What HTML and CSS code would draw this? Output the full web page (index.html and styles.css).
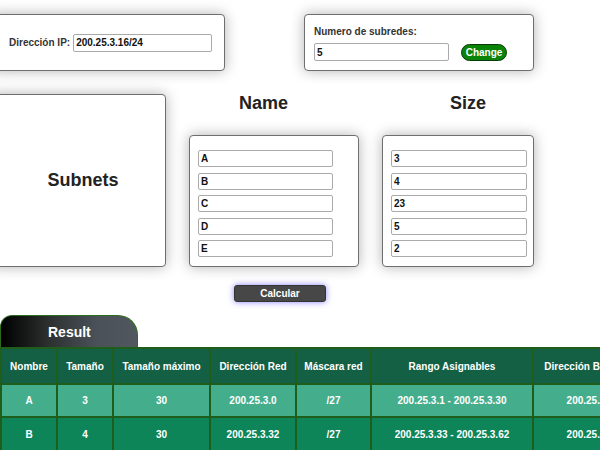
FILE: index.html
```html
<!DOCTYPE html>
<html lang="es">
<head>
<meta charset="utf-8">
<link rel="stylesheet" href="styles.css">
</head>
<body>
<div class="page">
  <div class="top-row">
    <div class="card ip-card">
      <label class="lbl">Dirección IP:</label>
      <input class="field ip-field" type="text" value="200.25.3.16/24">
    </div>
    <div class="card sub-card">
      <div class="lbl">Numero de subredes:</div>
      <div class="sub-line">
        <input class="field sub-field" type="text" value="5">
        <button class="change-btn">Change</button>
      </div>
    </div>
  </div>

  <div class="mid-row">
    <div class="card subnets-card">Subnets</div>
    <div class="col name-col">
      <h2 class="col-title">Name</h2>
      <div class="card list-card name-card">
        <input class="field list-field" type="text" value="A">
        <input class="field list-field" type="text" value="B">
        <input class="field list-field" type="text" value="C">
        <input class="field list-field" type="text" value="D">
        <input class="field list-field" type="text" value="E">
      </div>
    </div>
    <div class="col size-col">
      <h2 class="col-title">Size</h2>
      <div class="card list-card size-card">
        <input class="field list-field" type="text" value="3">
        <input class="field list-field" type="text" value="4">
        <input class="field list-field" type="text" value="23">
        <input class="field list-field" type="text" value="5">
        <input class="field list-field" type="text" value="2">
      </div>
    </div>
  </div>

  <div class="calc-row">
    <button class="calc-btn">Calcular</button>
  </div>

  <div class="result">
    <div class="tab">Result</div>
    <div class="table-wrap">
      <table class="res-table">
        <colgroup>
          <col class="c1"><col class="c2"><col class="c3"><col class="c4"><col class="c5"><col class="c6"><col class="c7">
        </colgroup>
        <thead>
          <tr>
            <th>Nombre</th>
            <th>Tamaño</th>
            <th>Tamaño máximo</th>
            <th>Dirección Red</th>
            <th>Máscara red</th>
            <th>Rango Asignables</th>
            <th>Dirección Broadcast</th>
          </tr>
        </thead>
        <tbody>
          <tr class="light">
            <td>A</td><td>3</td><td>30</td><td>200.25.3.0</td><td>/27</td><td>200.25.3.1 - 200.25.3.30</td><td>200.25.3.31</td>
          </tr>
          <tr class="dark">
            <td>B</td><td>4</td><td>30</td><td>200.25.3.32</td><td>/27</td><td>200.25.3.33 - 200.25.3.62</td><td>200.25.3.63</td>
          </tr>
        </tbody>
      </table>
    </div>
  </div>
</div>
</body>
</html>
```

FILE: styles.css
```css
* { box-sizing: border-box; }
html, body { margin: 0; padding: 0; background: #fff; overflow: hidden; }
body { font-family: "Liberation Sans", Arial, sans-serif; color: #222; width: 600px; height: 450px; }

.page { width: 600px; }

.card {
  background: #fff;
  border: 1px solid #6e6e6e;
  border-radius: 4px;
  box-shadow: 0 0 14px rgba(0, 0, 0, 0.3);
}

.lbl { font-size: 10px; font-weight: bold; color: #333; }

.field {
  font-family: "Liberation Sans", Arial, sans-serif;
  font-size: 10px;
  font-weight: bold;
  color: #111;
  border: 1px solid #aaa;
  border-radius: 2px;
  padding: 0 2px;
  height: 18px;
  background: #fff;
  outline: none;
}

.top-row { display: flex; padding-top: 14px; height: 94px; }
.ip-card {
  margin-left: -10px;
  width: 235px;
  height: 57px;
  display: flex;
  align-items: center;
  padding-left: 18px;
}
.ip-field { width: 139px; margin-left: 3px; }

.sub-card {
  margin-left: 79px;
  width: 230px;
  height: 57px;
  padding: 11px 0 0 9px;
}
.sub-line { display: flex; align-items: center; margin-top: 6px; }
.sub-field { width: 135px; }
.change-btn {
  margin-left: 12px;
  height: 17px;
  width: 46px;
  padding: 0;
  background: #098409;
  border: 1px solid #0a3a0a;
  border-radius: 9px;
  color: #fff;
  font-family: "Liberation Sans", Arial, sans-serif;
  font-size: 10px;
  font-weight: bold;
}

.mid-row { display: flex; align-items: flex-start; }
.subnets-card {
  margin-left: -10px;
  width: 176px;
  height: 173px;
  display: flex;
  align-items: center;
  justify-content: center;
  font-size: 18px;
  font-weight: bold;
  color: #222;
  padding-left: 10px;
}
.col { display: flex; flex-direction: column; align-items: flex-start; }
.name-col { margin-left: 23px; }
.size-col { margin-left: 23px; }
.col-title { margin: 0; font-size: 18px; font-weight: bold; color: #222; height: 41px; line-height: 18px; }
.name-col .col-title { padding-left: 50px; }
.size-col .col-title { padding-left: 68px; }
.list-card {
  height: 132px;
  padding: 14px 0 0 8px;
  display: flex;
  flex-direction: column;
  gap: 5.5px;
}
.name-card { width: 170px; }
.size-card { width: 152px; }
.list-field { height: 17px; }
.name-card .list-field { width: 135px; }
.size-card .list-field { width: 136px; }

.calc-row { display: flex; padding: 18px 0 0 234px; height: 48px; }
.calc-btn {
  width: 92px;
  height: 17px;
  background: #474747;
  border: 1px solid #333;
  border-radius: 3px;
  color: #fff;
  font-family: "Liberation Sans", Arial, sans-serif;
  font-size: 10px;
  font-weight: bold;
  box-shadow: 0 0 6px rgba(90, 80, 255, 0.7);
}

.tab {
  width: 138px;
  height: 32px;
  border: 1px solid #2c6b1c;
  border-bottom: none;
  border-radius: 12px 20px 0 0;
  background: linear-gradient(90deg, #000 0%, #2c302f 35%, #4a5159 70%, #50575f 100%);
  color: #fff;
  font-size: 14px;
  font-weight: bold;
  padding: 8px 0 0 47px;
}

.table-wrap { width: 600px; overflow: hidden; }
.res-table {
  border-collapse: collapse;
  width: 652px;
  table-layout: fixed;
  font-size: 10px;
  font-weight: bold;
  color: #fff;
}
.res-table th, .res-table td {
  border: 2px solid #1f5e1a;
  text-align: center;
  padding: 0;
  white-space: nowrap;
  overflow: hidden;
}
.res-table thead th { background: #146044; height: 36px; }
.res-table td { height: 33px; }
.res-table tr.light td { background: #44ae8c; }
.res-table tr.dark td { background: #0d8559; height: 34px; }
.c1 { width: 56px; }
.c2 { width: 56px; }
.c3 { width: 97px; }
.c4 { width: 86px; }
.c5 { width: 75px; }
.c6 { width: 162px; }
.c7 { width: 120px; }
```
